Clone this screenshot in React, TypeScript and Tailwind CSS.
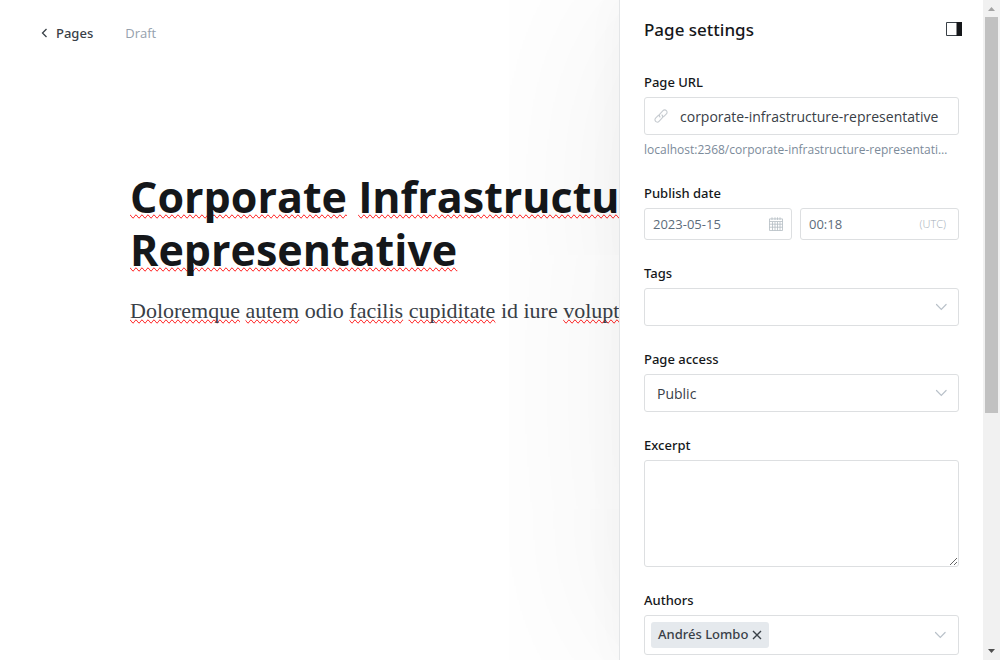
import type { ReactNode, SVGProps } from "react";

function Chevron(props: SVGProps<SVGSVGElement>) {
  return (
    <svg viewBox="0 0 12 8" fill="none" stroke="currentColor" strokeWidth="1.2" strokeLinecap="round" aria-hidden="true" {...props}>
      <path d="M1.500 1.500 6.300 6.300l4.800-4.800" />
    </svg>
  );
}

function LinkIcon() {
  return (
    <svg viewBox="0 0 14 14" className="h-3.5 w-3.5 shrink-0 text-[#c6cbd0]" fill="none" stroke="currentColor" strokeWidth="1.1" strokeLinecap="round" aria-hidden="true">
      <path d="M6 8a2.3 2.3 0 0 1 0-3.2L9 1.600a2.35 2.35 0 0 1 3.400 3.300l-2.200 2.300a2.300 2.300 0 0 1-1.700.700" />
      <path d="M8 6a2.300 2.300 0 0 1 0 3.200l-3 3.200a2.350 2.350 0 0 1-3.400-3.300l2.200-2.300A2.300 2.300 0 0 1 5.500 6.100" />
    </svg>
  );
}

function CalendarIcon() {
  return (
    <svg viewBox="0 0 14 14" className="h-3.5 w-3.5 shrink-0 text-[#b4bcc3]" fill="none" stroke="currentColor" strokeWidth="0.8" aria-hidden="true">
      <path d="M.5 1.900h13v11.600H.5zM.5 4.500h13M3 .3v2.600M6 .3v2.600M8.500 .3v2.600M11 .3v2.600M3.500 5v8.500M6 5v8.500M8.500 5v8.500M11 5v8.500M.5 7.200h13M.5 10.200h13" />
    </svg>
  );
}

function Typo({ children }: { children: ReactNode }) {
  return <span className="[text-decoration-line:spelling-error]">{children}</span>;
}

function Field({ label, id, children }: { label: string; id: string; children: ReactNode }) {
  return (
    <div className="mb-[23px] flex flex-col">
      <label htmlFor={id} className="mb-[5px] self-start font-['Noto_Sans',sans-serif] text-[13px] leading-5 font-medium text-[#15171a]">
        {label}
      </label>
      {children}
    </div>
  );
}

export default function App() {
  return (
    <div className="flex h-screen overflow-hidden bg-white font-['Open_Sans','Noto_Sans',sans-serif] text-[#394047]">
      <main className="min-w-0 flex-1 overflow-hidden">
        <header className="flex items-center gap-8 pt-6 pl-10 text-[13px] leading-[18px]">
          <a href="#pages" className="flex items-center gap-2 font-['Noto_Sans',sans-serif] font-medium">
            <svg viewBox="0 0 8 10" className="h-2.5 w-2" fill="none" stroke="currentColor" strokeWidth="1.3" aria-hidden="true">
              <path d="M6.500 1 2.500 5l4 4" />
            </svg>
            Pages
          </a>
          <span className="text-[#95a1ad]">Draft</span>
        </header>
        <article className="pt-32 pl-[130px]">
          <h1 className="text-[43px] leading-[53px] font-bold whitespace-nowrap text-[#15171a]">
            <Typo>Corporate</Typo> <Typo>Infrastructure</Typo>
            <br />
            <Typo>Representative</Typo>
          </h1>
          <p className="mt-[19px] font-['Liberation_Serif',serif] text-[22px] leading-8 whitespace-nowrap">
            <Typo>Doloremque</Typo> <Typo>autem</Typo> odio <Typo>facilis</Typo> <Typo>cupiditate</Typo> id iure{" "}
            <Typo>voluptatem</Typo>
          </p>
        </article>
      </main>

      <aside className="relative w-[364px] shrink-0 border-l border-[#e3e5e7] bg-white px-6 shadow-[0_0_200px_rgba(0,0,0,0.07),0_0_40px_rgba(0,0,0,0.03)]">
        <div className="flex items-center justify-between pt-4 pb-7">
          <h2 className="font-['Noto_Sans',sans-serif] text-[17px] leading-7 font-medium text-[#15171a]">Page settings</h2>
          <button type="button" aria-label="Close settings" className="-mr-[3px] pb-0.5">
            <svg viewBox="0 0 16 14" className="h-3.5 w-4" aria-hidden="true">
              <path d="M.5.5h15v13H.5z" fill="none" stroke="#394047" />
              <path d="M10.500 0H16v14h-5.500z" fill="#15171a" />
            </svg>
          </button>
        </div>
        <form>
          <Field label="Page URL" id="url">
            <div className="flex h-[38px] items-center gap-3 rounded-[3px] border border-[#dddfe1] px-[9px]">
              <LinkIcon />
              <input id="url" defaultValue="corporate-infrastructure-representative" className="h-full w-0 flex-1 bg-transparent pt-px text-sm outline-none" />
            </div>
            <p className="mt-1 truncate pr-2 text-xs leading-[21px] text-[#7c8b9a]">localhost:2368/corporate-infrastructure-representative/</p>
          </Field>
          <Field label="Publish date" id="date">
            <div className="flex gap-2 text-[13px] text-[#5d6c7b]">
              <div className="flex h-8 w-[148px] items-center rounded-[3px] border border-[#dddfe1] px-2">
                <input id="date" defaultValue="2023-05-15" className="h-full w-0 flex-1 bg-transparent outline-none" />
                <CalendarIcon />
              </div>
              <div className="flex h-8 min-w-0 flex-1 items-center rounded-[3px] border border-[#dddfe1] pr-3 pl-2">
                <input aria-label="Publish time" defaultValue="00:18" className="h-full w-0 flex-1 bg-transparent outline-none" />
                <span className="text-[11px] font-light text-[#a3adb8]">(UTC)</span>
              </div>
            </div>
          </Field>
          <Field label="Tags" id="tags">
            <div className="grid items-center">
              <select id="tags" defaultValue="" className="col-start-1 row-start-1 h-[38px] appearance-none rounded-[3px] border border-[#dddfe1] bg-white px-3 outline-none">
                <option value="" />
              </select>
              <Chevron className="pointer-events-none col-start-1 row-start-1 mr-3 h-2 w-3 justify-self-end text-[#b9c1c9]" />
            </div>
          </Field>
          <Field label="Page access" id="access">
            <div className="grid items-center">
              <select id="access" className="col-start-1 row-start-1 h-[38px] appearance-none rounded-[3px] border border-[#dddfe1] bg-white px-3 pt-0.5 text-sm outline-none">
                <option>Public</option>
              </select>
              <Chevron className="pointer-events-none col-start-1 row-start-1 mr-3 h-2 w-3 justify-self-end text-[#b9c1c9]" />
            </div>
          </Field>
          <Field label="Excerpt" id="excerpt">
            <textarea id="excerpt" className="h-[107px] resize-y rounded-[3px] border border-[#dddfe1] px-3 py-2 text-sm outline-none" />
          </Field>
          <Field label="Authors" id="authors">
            <div className="flex h-10 items-center rounded-[3px] border border-[#dddfe1] pr-3 pl-1.5">
              <span className="flex h-[26px] items-center gap-1 rounded-[3px] bg-[#e5e9ed] px-[7px] font-['Noto_Sans',sans-serif] text-[13px] font-medium">
                Andrés Lombo
                <button type="button" aria-label="Remove Andrés Lombo">
                  <svg viewBox="0 0 10 10" className="h-2.5 w-2.5" fill="none" stroke="currentColor" strokeWidth="1.4" aria-hidden="true">
                    <path d="m1 1 8 8M9 1 1 9" />
                  </svg>
                </button>
              </span>
              <input id="authors" className="w-0 flex-1 bg-transparent outline-none" />
              <Chevron className="h-2 w-3 text-[#b9c1c9]" />
            </div>
          </Field>
        </form>
      </aside>

      <div className="z-10 flex w-[17px] shrink-0 flex-col items-center bg-[#f1f1f1]" aria-hidden="true">
        <svg viewBox="0 0 17 17" className="h-[17px] w-[17px]">
          <path d="M5 11h7L8.500 7z" fill="#a3a3a3" />
        </svg>
        <div className="h-[60%] w-[13px] bg-[#c1c1c1]" />
        <svg viewBox="0 0 17 17" className="mt-auto h-[17px] w-[17px]">
          <path d="M5 6h7l-3.500 4z" fill="#505050" />
        </svg>
      </div>
    </div>
  );
}
